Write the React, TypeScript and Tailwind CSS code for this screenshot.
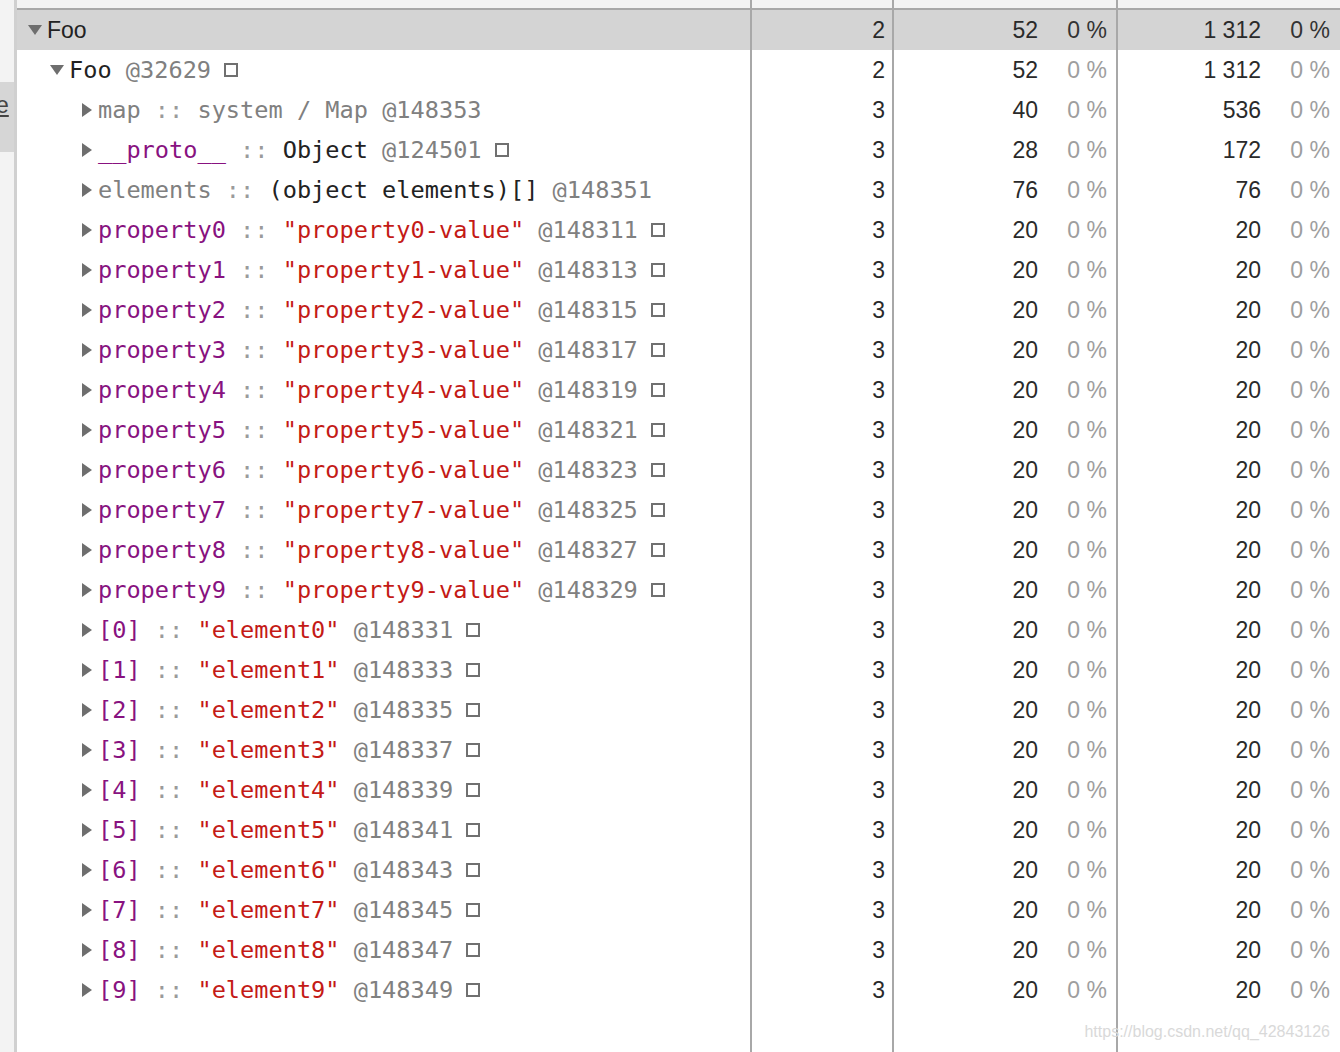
import React from "react";

const MONO = "font-['DejaVu_Sans_Mono',monospace]";
const SANS = "font-['Liberation_Sans',Arial,sans-serif]";

type Seg = { t: string; c: string };
type Row = {
  level: number;
  open?: boolean;
  segs: Seg[];
  square?: boolean;
  count: string;
  shallow: string;
  retained: string;
  selected?: boolean;
  sans?: boolean;
};

const P = "text-[#881280]";
const R = "text-[#c41a16]";
const G = "text-[#808080]";
const GL = "text-[#9a9a9a]";
const D = "text-[#222222]";

const rows: Row[] = [
  { level: 0, open: true, segs: [{ t: "Foo", c: D }], count: "2", shallow: "52", retained: "1 312", selected: true, sans: true },
  { level: 1, open: true, segs: [{ t: "Foo ", c: D }, { t: "@32629", c: G }], square: true, count: "2", shallow: "52", retained: "1 312" },
  { level: 2, segs: [{ t: "map", c: G }, { t: " :: ", c: GL }, { t: "system / Map", c: G }, { t: " @148353", c: G }], count: "3", shallow: "40", retained: "536" },
  { level: 2, segs: [{ t: "__proto__", c: P }, { t: " :: ", c: GL }, { t: "Object", c: D }, { t: " @124501", c: G }], square: true, count: "3", shallow: "28", retained: "172" },
  { level: 2, segs: [{ t: "elements", c: G }, { t: " :: ", c: GL }, { t: "(object elements)[]", c: D }, { t: " @148351", c: G }], count: "3", shallow: "76", retained: "76" },
];

for (let i = 0; i < 10; i++) {
  rows.push({
    level: 2,
    segs: [
      { t: `property${i}`, c: P },
      { t: " :: ", c: GL },
      { t: `"property${i}-value"`, c: R },
      { t: ` @${148311 + i * 2}`, c: G },
    ],
    square: true,
    count: "3",
    shallow: "20",
    retained: "20",
  });
}
for (let i = 0; i < 10; i++) {
  rows.push({
    level: 2,
    segs: [
      { t: `[${i}]`, c: P },
      { t: " :: ", c: GL },
      { t: `"element${i}"`, c: R },
      { t: ` @${148331 + i * 2}`, c: G },
    ],
    square: true,
    count: "3",
    shallow: "20",
    retained: "20",
  });
}

function Tri({ open }: { open?: boolean }) {
  if (open) {
    return (
      <svg width="14" height="10" viewBox="0 0 14 10" className="shrink-0">
        <path d="M0 0 L14 0 L7 10 Z" fill="#6e6e6e" />
      </svg>
    );
  }
  return (
    <svg width="10" height="14" viewBox="0 0 10 14" className="shrink-0">
      <path d="M0 0 L10 7 L0 14 Z" fill="#6e6e6e" />
    </svg>
  );
}

function NameCell({ r }: { r: Row }) {
  const pl = r.level === 0 ? "pl-[11px]" : r.level === 1 ? "pl-[33px]" : "pl-[65px]";
  const gap = r.level === 2 ? "gap-[6px]" : "gap-[5px]";
  return (
    <div className={`w-[735px] shrink-0 border-r-2 border-[#a8a8a8] flex items-center ${pl} ${gap} overflow-hidden whitespace-pre`}>
      <Tri open={r.open} />
      <span className={`${r.sans ? `${SANS} text-[23px]` : `${MONO} text-[23.6px] pt-[2px]`} leading-none flex items-center`}>
        {r.segs.map((s, i) => (
          <span key={i} className={s.c}>
            {s.t}
          </span>
        ))}
        {r.square && <span className="inline-block w-[14px] h-[14px] border-2 border-[#707070] ml-[13px] mt-[-2px]" />}
      </span>
    </div>
  );
}

function NumCells({ r }: { r: Row }) {
  const pc = r.selected ? "text-[#333333]" : "text-[#9e9e9e]";
  return (
    <>
      <div className={`w-[142px] shrink-0 border-r-2 border-[#a8a8a8] flex items-center justify-end pr-[7px] ${SANS} text-[23px] text-[#2a2a2a]`}>
        {r.count}
      </div>
      <div className={`w-[224px] shrink-0 border-r-2 border-[#a8a8a8] flex items-center justify-end pr-[9px] ${SANS} text-[23px] text-[#2a2a2a]`}>
        <span>{r.shallow}</span>
        <span className={`w-[69px] text-right ${pc}`}>0 %</span>
      </div>
      <div className={`flex-1 flex items-center justify-end pr-[10px] ${SANS} text-[23px] text-[#2a2a2a]`}>
        <span>{r.retained}</span>
        <span className={`w-[69px] text-right ${pc}`}>0 %</span>
      </div>
    </>
  );
}

export default function App() {
  return (
    <div className="w-[1340px] h-[1052px] bg-white flex overflow-hidden relative">
      <div className="w-[17px] shrink-0 bg-[#f3f3f3] border-r-[3px] border-[#d0d0d0] flex flex-col overflow-hidden">
        <div className="h-[82px] shrink-0" />
        <div className="h-[70px] shrink-0 bg-[#d6d6d6] flex flex-col items-start pt-[12px] overflow-hidden">
          <span className={`${SANS} text-[23px] text-[#444] underline ml-[-4px] leading-none`}>e</span>
        </div>
        <div className="flex-1" />
      </div>
      <div className="flex-1 flex flex-col">
        <div className="h-[10px] shrink-0 flex bg-[#f3f3f3] border-b-2 border-[#a8a8a8]">
          <div className="w-[735px] shrink-0 border-r-2 border-[#a8a8a8]" />
          <div className="w-[142px] shrink-0 border-r-2 border-[#a8a8a8]" />
          <div className="w-[224px] shrink-0 border-r-2 border-[#a8a8a8]" />
          <div className="flex-1" />
        </div>
        {rows.map((r, i) => (
          <div key={i} className={`h-[40px] shrink-0 flex ${r.selected ? "bg-[#d4d4d4]" : "bg-white"}`}>
            <NameCell r={r} />
            <NumCells r={r} />
          </div>
        ))}
        <div className="flex-1 flex">
          <div className="w-[735px] shrink-0 border-r-2 border-[#a8a8a8]" />
          <div className="w-[142px] shrink-0 border-r-2 border-[#a8a8a8]" />
          <div className="w-[224px] shrink-0 border-r-2 border-[#a8a8a8]" />
          <div className="flex-1" />
        </div>
      </div>
      <div className={`absolute right-[10px] bottom-[8px] ${SANS} text-[16px] text-[#d9d9d9]`}>https://blog.csdn.net/qq_42843126</div>
    </div>
  );
}
